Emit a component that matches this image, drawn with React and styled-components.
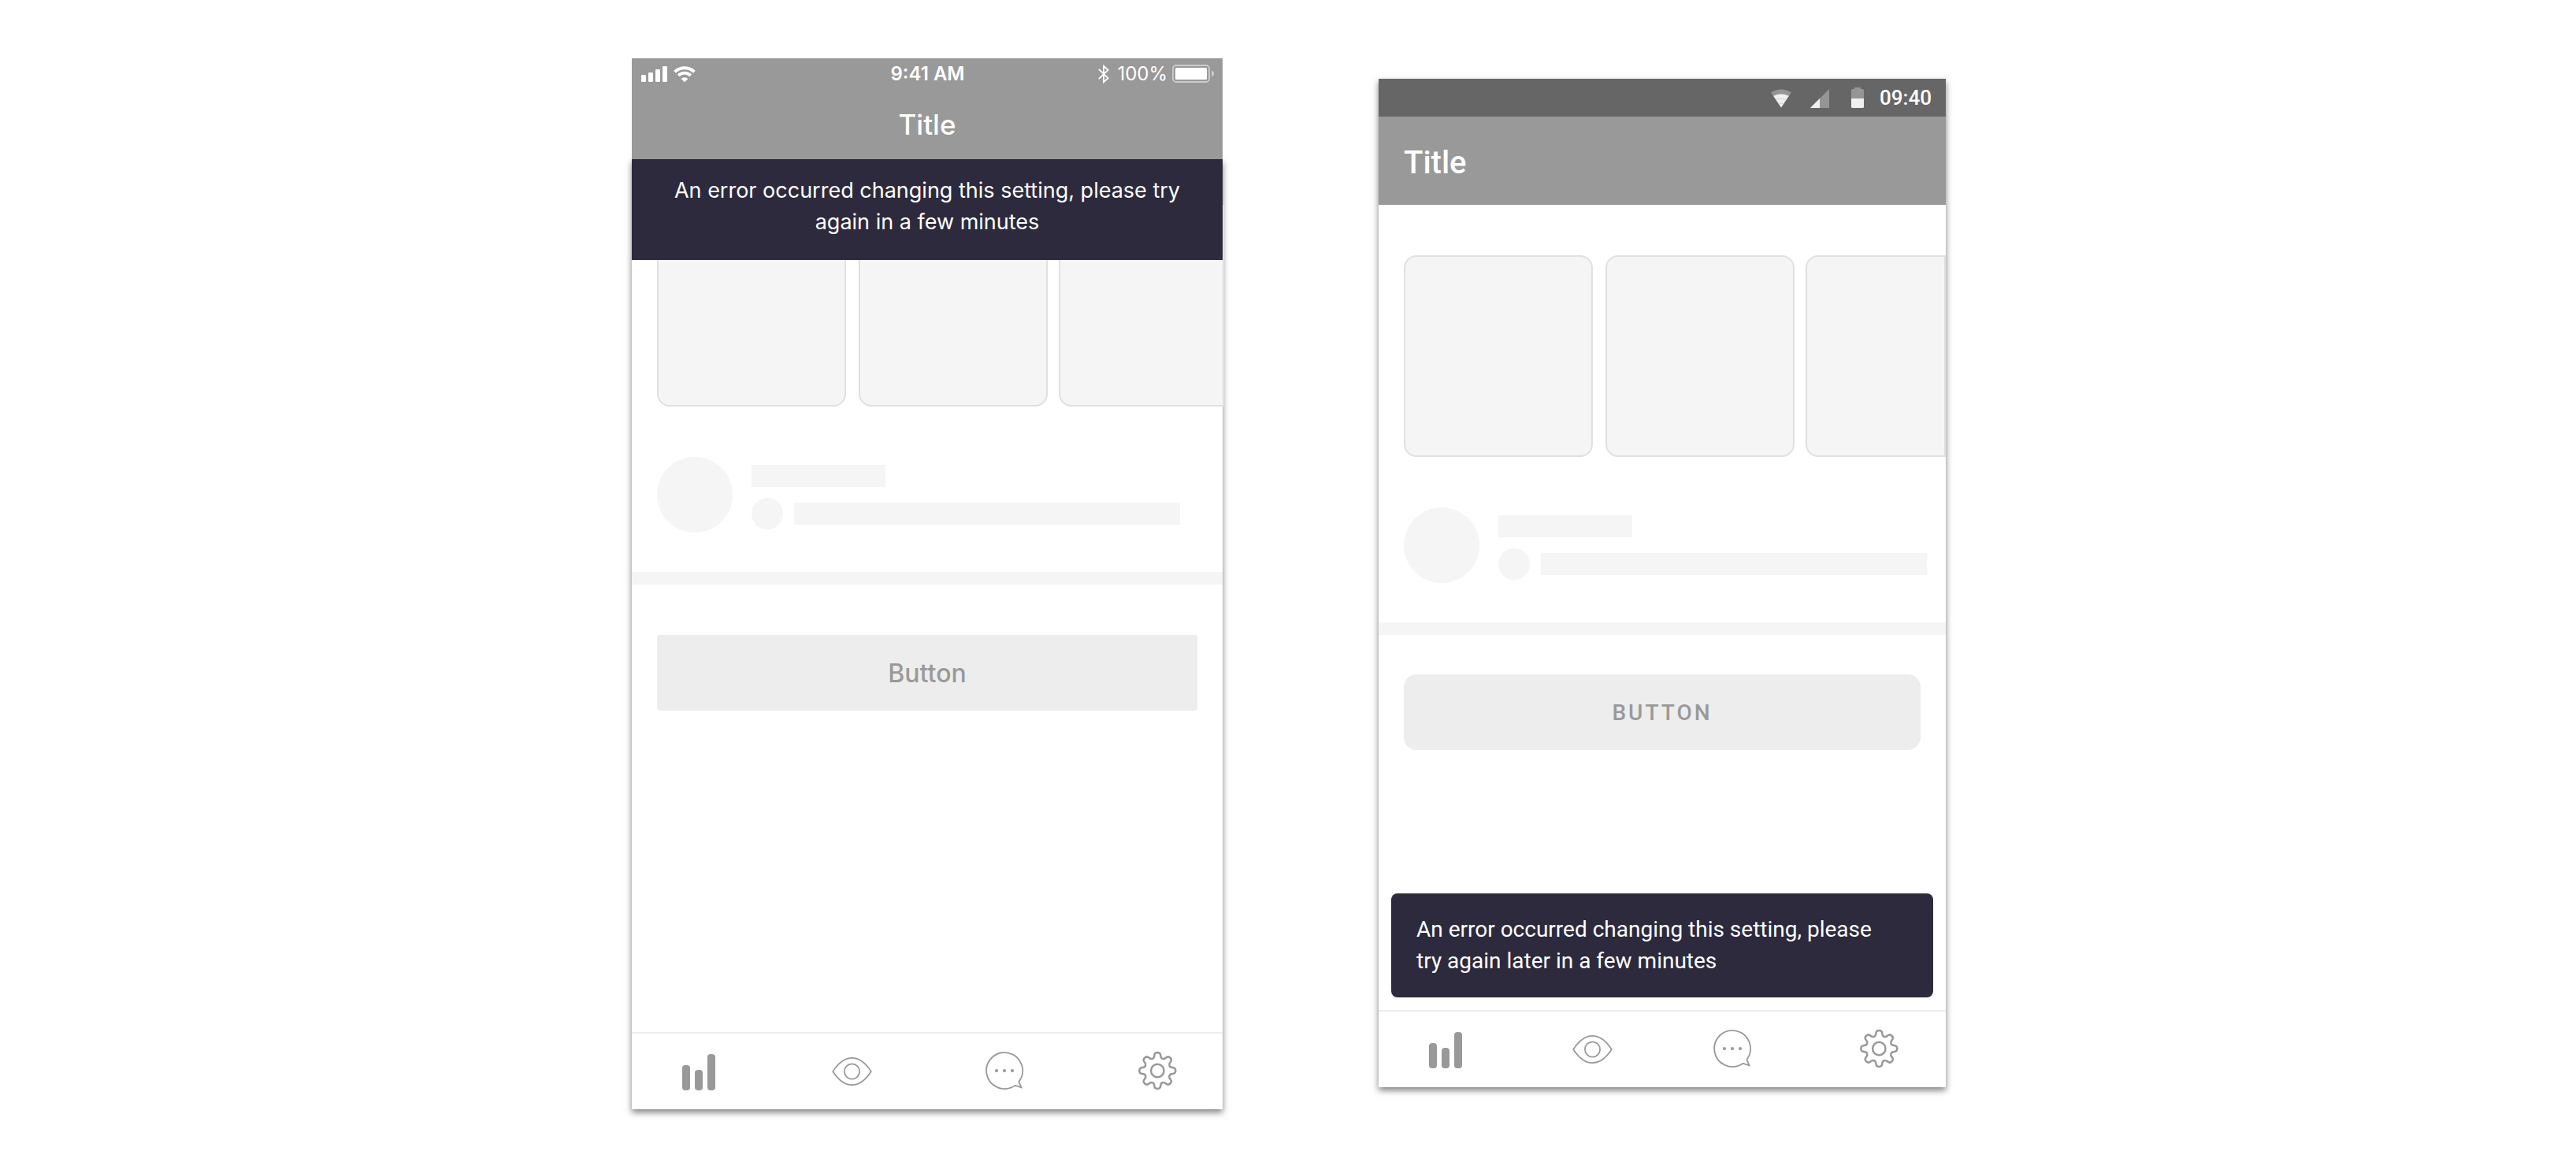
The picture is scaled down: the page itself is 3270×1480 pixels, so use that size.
import React from "react";
import styled, { createGlobalStyle } from "styled-components";

const grey = "#999999";
const navy = "#2c2a3c";
const ios = `Inter, "Liberation Sans", sans-serif`;
const android = `Roboto, "Liberation Sans", sans-serif`;

const GlobalStyle = createGlobalStyle`
  *, *::before, *::after { box-sizing: border-box; }
  body { margin: 0; background: #ffffff; }
  svg { display: block; flex: none; }
`;

const Page = styled.main`
  display: flex;
  justify-content: center;
  align-items: flex-start;
  gap: 198px;
  min-height: 100vh;
  padding: 74px 0 72px 2px;
`;

const Phone = styled.section`
  display: flex;
  flex-direction: column;
  flex: 0 1 ${(p) => p.$width}px;
  min-width: 0;
  min-height: ${(p) => p.$height}px;
  margin-top: ${(p) => p.$drop || 0}px;
  font-family: ${(p) => p.$font};
  ${(p) => p.$raised && "box-shadow: 0 4px 8px rgba(0, 0, 0, 0.5);"}
`;

const Header = styled.header`
  position: relative;
  z-index: 1;
  background: ${grey};
  color: #ffffff;
`;

const IosStatus = styled.div`
  display: grid;
  grid-template-columns: 1fr auto 1fr;
  align-items: center;
  height: 40px;
  padding: 0 11px 0 12px;
  font-size: 24px;
  line-height: 28px;
`;

const StatusGroup = styled.div`
  display: flex;
  align-items: center;
  justify-content: ${(p) => (p.$end ? "flex-end" : "flex-start")};
  gap: ${(p) => p.$gap}px;
`;

const Charge = styled.span`
  padding-left: 4px;
`;

const Time = styled.time`
  font-weight: ${(p) => p.$weight};
`;

const IosTitle = styled.h1`
  margin: 0;
  height: 88px;
  font-size: 35px;
  font-weight: 500;
  line-height: 88px;
  text-align: center;
`;

const AndroidStatus = styled.div`
  display: flex;
  align-items: center;
  justify-content: flex-end;
  height: 48px;
  padding: 0 18px;
  background: #666666;
  font-size: 26px;
  line-height: 48px;
`;

const AndroidIcons = styled.div`
  display: flex;
  gap: 24px;
  margin-right: 20px;
`;

const AndroidTitle = styled.h1`
  margin: 0;
  padding: 4px 32px 0;
  height: 112px;
  font-size: 40px;
  font-weight: 500;
  line-height: 110px;
`;

const Screen = styled.div`
  position: relative;
  display: flex;
  flex-direction: column;
  flex: 1;
  background: #ffffff;
  ${(p) => p.$raised && "box-shadow: 0 4px 8px rgba(0, 0, 0, 0.5);"}
`;

const Content = styled.div`
  flex: 1;
  padding-top: ${(p) => p.$top}px;
`;

const Cards = styled.div`
  display: flex;
  gap: 16px;
  padding-left: 32px;
  margin-right: ${(p) => (p.$bleed ? -2 : 0)}px;
`;

const Card = styled.div`
  flex: none;
  width: 240px;
  height: 256px;
  border: 2px solid #e0e0e0;
  border-radius: 16px;
  background: #f5f5f5;

  &:last-child {
    flex: 1;
    min-width: 0;
    margin-left: -2px;
    border-radius: 16px 0 0 16px;
  }
`;

const Profile = styled.div`
  display: flex;
  gap: 24px;
  padding: 64px 24px 50px 32px;
`;

const Lines = styled.div`
  flex: 1;
  min-width: 0;
  padding-top: 10px;
`;

const LineRow = styled.div`
  display: flex;
  align-items: center;
  gap: 14px;
  margin-top: 14px;
`;

const Disc = styled.div`
  flex: none;
  width: ${(p) => p.$size}px;
  height: ${(p) => p.$size}px;
  border-radius: 50%;
  background: #f5f5f5;
`;

const Line = styled.div`
  flex: 0 1 ${(p) => p.$width}px;
  max-width: ${(p) => p.$width}px;
  height: 28px;
  background: #f5f5f5;
`;

const Divider = styled.hr`
  height: 16px;
  margin: 0;
  border: 0;
  background: #f5f5f5;
`;

const ButtonArea = styled.div`
  padding: ${(p) => p.$top}px 32px 0;
`;

const Button = styled.button`
  display: block;
  width: 100%;
  height: 96px;
  padding: 0;
  border: 0;
  border-radius: ${(p) => p.$radius}px;
  background: #ededed;
  color: ${grey};
  font-family: inherit;
  font-size: ${(p) => p.$size}px;
  font-weight: 500;
  letter-spacing: ${(p) => p.$tracking || 0}px;
`;

const Banner = styled.div`
  position: absolute;
  top: 0;
  left: 0;
  right: 0;
  padding: 20px 40px 28px;
  background: ${navy};
  color: #ffffff;
  font-size: 27px;
  line-height: 40px;
  text-align: center;
`;

const Snackbar = styled.div`
  margin: 0 16px 16px;
  padding: 26px 64px 26px 32px;
  border-radius: 8px;
  background: ${navy};
  color: #ffffff;
  font-size: 28px;
  line-height: 40px;
`;

const Nav = styled.nav`
  display: flex;
  justify-content: space-between;
  align-items: center;
  height: 98px;
  padding: 0 ${(p) => p.$right}px 0 57px;
  border-top: 2px solid #ededed;
`;

const NavPair = styled.div`
  display: flex;
  gap: ${(p) => p.$gap}px;
`;

const NavButton = styled.button`
  padding: 0;
  border: 0;
  background: none;
  color: ${grey};
`;

const NavSvg = ({ children }) => (
  <svg width="56" height="56" viewBox="0 0 56 56" fill="none" stroke="currentColor" strokeLinejoin="round" aria-hidden="true">
    {children}
  </svg>
);

const BarsIcon = () => (
  <NavSvg>
    <g fill="currentColor" stroke="none">
      <rect x="7" y="20" width="10" height="32" rx="4" />
      <rect x="23" y="26" width="10" height="26" rx="4" />
      <rect x="39" y="6" width="10" height="46" rx="4" />
    </g>
  </NavSvg>
);

const EyeIcon = () => (
  <NavSvg>
    <g strokeWidth="1.8">
      <path d="M4.200 28C11 17.500 18.500 10.900 28.500 10.900S46 17.500 52.800 28C46 38.500 38.500 45.100 28.500 45.100S11 38.500 4.200 28Z" />
      <circle cx="28.5" cy="28" r="9.6" />
    </g>
  </NavSvg>
);

const ChatIcon = () => (
  <NavSvg>
    <path strokeWidth="1.8" strokeLinejoin="miter" d="M46.700 40.500A23 23 0 1 0 40.700 46.200Q41.300 45.900 42 46L49.500 48.300L46.700 41.900Q46.300 41.200 46.700 40.500Z" />
    <g fill="currentColor" stroke="none">
      <circle cx="18" cy="27" r="2.1" />
      <circle cx="28" cy="27" r="2.1" />
      <circle cx="38" cy="27" r="2.1" />
    </g>
  </NavSvg>
);

const gearPath = (() => {
  const turn = (x, y, i) => {
    const a = (i * Math.PI) / 4;
    return `${(x * Math.cos(a) - y * Math.sin(a)).toFixed(2)} ${(x * Math.sin(a) + y * Math.cos(a)).toFixed(2)}`;
  };
  let d = `M${turn(-6.3, -15.2, 0)}`;
  for (let i = 0; i < 8; i += 1) {
    d += `C${turn(-4.6, -15.9, i)} ${turn(-4.1, -17.2, i)} ${turn(-4, -19, i)}`;
    d += `C${turn(-3.8, -24.3, i)} ${turn(3.8, -24.3, i)} ${turn(4, -19, i)}`;
    d += `C${turn(4.1, -17.2, i)} ${turn(4.6, -15.9, i)} ${turn(6.3, -15.2, i)}`;
  }
  return `${d}Z`;
})();

const GearIcon = () => (
  <NavSvg>
    <g strokeWidth="2.5" transform="translate(28.3 27)">
      <path d={gearPath} />
      <circle r="8.2" />
    </g>
  </NavSvg>
);

const IosSignal = () => (
  <svg width="33" height="20" viewBox="0 0 33 20" fill="#fff" aria-hidden="true">
    <rect x="0" y="11" width="6" height="9" rx="1.2" />
    <rect x="9" y="8" width="6" height="12" rx="1.2" />
    <rect x="18" y="4" width="6" height="16" rx="1.2" />
    <rect x="27" y="0" width="6" height="20" rx="1.2" />
  </svg>
);

const IosWifi = () => (
  <svg width="28" height="20" viewBox="0 0 28 20" fill="none" stroke="#fff" aria-hidden="true">
    <path strokeWidth="4" d="M1.600 7.200A18 18 0 0 1 26.400 7.200" />
    <path strokeWidth="3.8" d="M6.200 11.800A11.400 11.400 0 0 1 21.800 11.800" />
    <path fill="#fff" stroke="none" d="M9.600 15.900A6.400 6.400 0 0 1 18.400 15.900L14.600 19.700Q14 20.200 13.400 19.700Z" />
  </svg>
);

const Bluetooth = () => (
  <svg width="14" height="24" viewBox="0 0 14 24" fill="none" stroke="#fff" strokeWidth="1.8" aria-hidden="true">
    <path d="M0.800 5.800L12.600 17.200L7 22.200V1.800L12.600 6.800L0.800 18.200" />
  </svg>
);

const IosBattery = () => (
  <svg width="53" height="24" viewBox="0 0 53 24" aria-hidden="true">
    <rect x="1" y="1" width="46" height="21" rx="4" fill="none" stroke="#fff" strokeOpacity="0.5" strokeWidth="1.8" />
    <rect x="4" y="4" width="40" height="15" rx="1.5" fill="#fff" />
    <path d="M50 7.600Q53 8.800 53 11.500T50 15.400Z" fill="#fff" fillOpacity="0.5" />
  </svg>
);

const AndroidWifi = () => (
  <svg width="26" height="26" viewBox="0 0 27 26" aria-hidden="true">
    <path d="M0 6Q13.500 -2 27 6L13.500 26Z" fill="#959595" />
    <path d="M3.300 10.700Q13.500 5.300 23.700 10.700L13.500 26Z" fill="#f0f0f0" />
    <path d="M7.500 15.300Q13.500 13.300 19.500 15.300M10 20.800Q13.500 20 17 20.800" fill="none" stroke="#d2d2d2" />
  </svg>
);

const AndroidSignal = () => (
  <svg width="28" height="26" viewBox="0 0 28 26" aria-hidden="true">
    <path d="M24 2V26H0Z" fill="#959595" />
    <path d="M12 14V26H0Z" fill="#f0f0f0" />
  </svg>
);

const AndroidBattery = () => (
  <svg width="16" height="26" viewBox="0 0 16 26" aria-hidden="true">
    <path d="M0 14V4Q0 2 2 2H4V0H12V2H14Q16 2 16 4V14Z" fill="#959595" />
    <path d="M0 14H16V24.500Q16 26 14.500 26H1.500Q0 26 0 24.500Z" fill="#f0f0f0" />
  </svg>
);

const BottomNav = ({ gap, right }) => (
  <Nav $right={right}>
    <NavPair $gap={gap}>
      <NavButton aria-label="Activity"><BarsIcon /></NavButton>
      <NavButton aria-label="Watch"><EyeIcon /></NavButton>
    </NavPair>
    <NavPair $gap={gap}>
      <NavButton aria-label="Messages"><ChatIcon /></NavButton>
      <NavButton aria-label="Settings"><GearIcon /></NavButton>
    </NavPair>
  </Nav>
);

const Placeholder = ({ bleed }) => (
  <>
    <Cards $bleed={bleed}>
      <Card />
      <Card />
      <Card />
    </Cards>
    <Profile>
      <Disc $size={96} />
      <Lines>
        <Line $width={170} />
        <LineRow>
          <Disc $size={40} />
          <Line $width={490} />
        </LineRow>
      </Lines>
    </Profile>
    <Divider />
  </>
);

export default function App() {
  return (
    <>
      <GlobalStyle />
      <Page>
        <Phone $width={750} $height={1334} $font={ios}>
          <Header>
            <IosStatus>
              <StatusGroup $gap={8}>
                <IosSignal />
                <IosWifi />
              </StatusGroup>
              <Time $weight={600}>9:41 AM</Time>
              <StatusGroup $gap={6} $end>
                <Bluetooth />
                <Charge>100%</Charge>
                <IosBattery />
              </StatusGroup>
            </IosStatus>
            <IosTitle>Title</IosTitle>
          </Header>
          <Screen $raised>
            <Content $top={58}>
              <Placeholder bleed />
              <ButtonArea $top={64}>
                <Button $radius={4} $size={32}>Button</Button>
              </ButtonArea>
            </Content>
            <Banner role="alert">
              An error occurred changing this setting, please try again in a few minutes
            </Banner>
            <BottomNav gap={138} right={55} />
          </Screen>
        </Phone>

        <Phone $width={720} $height={1280} $drop={26} $font={android} $raised>
          <Header>
            <AndroidStatus>
              <AndroidIcons>
                <AndroidWifi />
                <AndroidSignal />
                <AndroidBattery />
              </AndroidIcons>
              <Time $weight={500}>09:40</Time>
            </AndroidStatus>
            <AndroidTitle>Title</AndroidTitle>
          </Header>
          <Screen>
            <Content $top={64}>
              <Placeholder />
              <ButtonArea $top={50}>
                <Button $radius={16} $size={28} $tracking={3}>BUTTON</Button>
              </ButtonArea>
            </Content>
            <Snackbar role="alert">
              An error occurred changing this setting, please try again later in a few minutes
            </Snackbar>
            <BottomNav gap={130} right={57} />
          </Screen>
        </Phone>
      </Page>
    </>
  );
}
